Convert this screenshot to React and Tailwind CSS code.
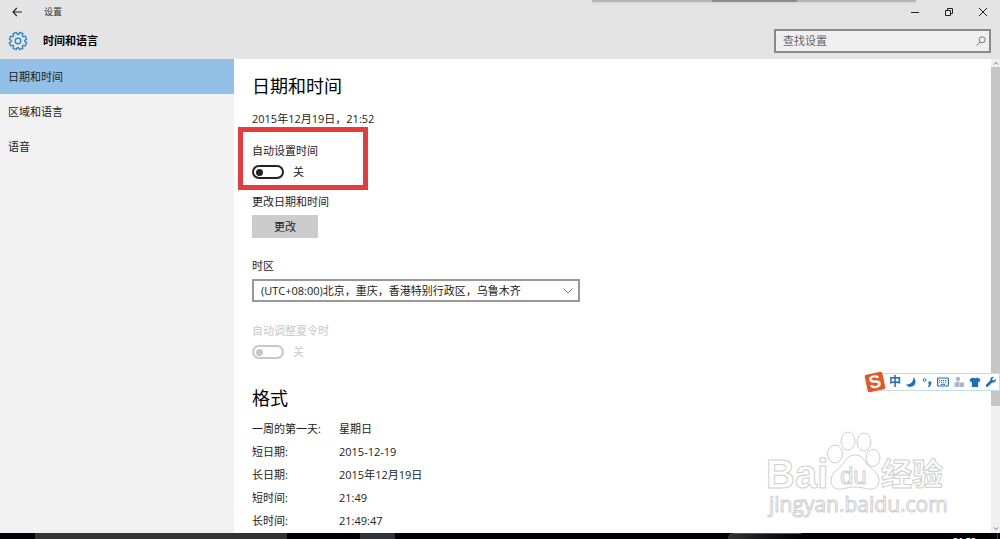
import React, { useState } from "react";

const NAV_ITEMS = ["日期和时间", "区域和语言", "语音"];

const FORMATS = [
  { label: "一周的第一天:", value: "星期日" },
  { label: "短日期:", value: "2015-12-19" },
  { label: "长日期:", value: "2015年12月19日" },
  { label: "短时间:", value: "21:49" },
  { label: "长时间:", value: "21:49:47" },
];

const GearIcon = () => {
  // eight teeth around the hub
  const points = [];
  for (let i = 0; i < 8; i++) {
    const base = (i * Math.PI) / 4 - Math.PI / 2 + Math.PI / 8;
    [
      [-0.28, 6.8],
      [-0.2, 8.8],
      [0.2, 8.8],
      [0.28, 6.8],
    ].forEach(([offset, r]) => {
      const x = 10 + r * Math.cos(base + offset);
      const y = 10 + r * Math.sin(base + offset);
      points.push(`${x.toFixed(2)},${y.toFixed(2)}`);
    });
  }
  return (
    <svg className="size-5" viewBox="0 0 20 20" fill="none" stroke="#2b83c6">
      <polygon points={points.join(" ")} strokeWidth="1.3" strokeLinejoin="round" />
      <circle cx="10" cy="10" r="2.8" strokeWidth="1.3" />
    </svg>
  );
};

const Toggle = ({ id, label, disabled }) => {
  const [on, setOn] = useState(false);
  return (
    <div className={disabled ? "text-[#c8c8c8]" : "text-[#222]"}>
      <label htmlFor={id} className="block">
        {label}
      </label>
      <div className="mt-[5px] flex h-4 items-center gap-[9px]">
        <input
          id={id}
          type="checkbox"
          role="switch"
          checked={on}
          disabled={disabled}
          onChange={(e) => setOn(e.target.checked)}
          className="flex h-3.5 w-8 appearance-none items-center rounded-full border-2 border-current px-0.5 before:size-[7px] before:rounded-full before:bg-current checked:justify-end"
        />
        <span>{on ? "开" : "关"}</span>
      </div>
    </div>
  );
};

const Header = () => (
  <header className="h-[59px] shrink-0 bg-[#e4e4e4]">
    <div className="flex h-6 items-center justify-between pr-3 pl-3">
      <div className="flex items-center gap-[22px] text-[9px] text-[#333]">
        <button type="button" aria-label="返回">
          <svg className="h-2.5 w-2.5" viewBox="0 0 10 10" fill="none" stroke="#222">
            <path d="M10 5H1M4.8 1L1 5l3.8 4" strokeWidth="1.1" />
          </svg>
        </button>
        <span>设置</span>
      </div>
      <div className="flex items-center gap-6">
        <button type="button" aria-label="最小化">
          <svg className="size-2.5" viewBox="0 0 10 10" stroke="#222">
            <path d="M1 5.5h8" />
          </svg>
        </button>
        <button type="button" aria-label="还原">
          <svg className="size-2.5" viewBox="0 0 10 10" fill="none" stroke="#222">
            <path d="M1.5 3.5h5v5h-5zM3.5 3.5v-2h5v5h-2" />
          </svg>
        </button>
        <button type="button" aria-label="关闭">
          <svg className="size-2.5" viewBox="0 0 10 10" stroke="#222">
            <path d="M1 1l8 8M9 1L1 9" />
          </svg>
        </button>
      </div>
    </div>
    <div className="flex h-[34px] items-center justify-between pr-[9px] pl-2">
      <div className="flex items-center gap-[15px]">
        <GearIcon />
        <h1 className="text-[11px] font-bold text-black">时间和语言</h1>
      </div>
      <label className="flex h-6 w-[217px] items-center border-2 border-[#8a8a8a] bg-[#efefef] pr-[3px] pl-[7px]">
        <input
          type="text"
          aria-label="查找设置"
          placeholder="查找设置"
          className="min-w-0 flex-1 bg-transparent outline-none placeholder:text-[#666]"
        />
        <svg className="size-2.5" viewBox="0 0 10 10" fill="none" stroke="#777">
          <circle cx="6.2" cy="3.8" r="3" />
          <path d="M4 6L.5 9.5" />
        </svg>
      </label>
    </div>
  </header>
);

const Sidebar = () => {
  const [active, setActive] = useState(NAV_ITEMS[0]);
  return (
    <nav className="w-[234px] shrink-0 bg-[#f1f1f1]">
      {NAV_ITEMS.map((item) => (
        <button
          key={item}
          type="button"
          onClick={() => setActive(item)}
          className={`block h-[35px] w-full px-2 text-left ${
            item === active ? "bg-[#92c0e6]" : ""
          }`}
        >
          {item}
        </button>
      ))}
    </nav>
  );
};

const ScrollBar = () => (
  <div className="flex w-[9px] shrink-0 flex-col items-center bg-[#f0f0f0]">
    <svg className="h-2 w-1.5 shrink-0" viewBox="0 0 6 8" fill="none" stroke="#777">
      <path d="M1 5.5l2-2 2 2" />
    </svg>
    <div className="w-full grow-[74] basis-0 bg-[#c6c6c6]" />
    <div className="grow-[26] basis-0" />
    <svg className="h-2 w-1.5 shrink-0" viewBox="0 0 6 8" fill="none" stroke="#777">
      <path d="M1 2.5l2 2 2-2" />
    </svg>
  </div>
);

const Watermark = () => (
  <svg
    className="pointer-events-none absolute right-[52px] bottom-3 h-[90px] w-[184px]"
    viewBox="0 0 184 90"
    fill="#fff"
    stroke="#cfcfcf"
    strokeWidth="1"
  >
    <text x="2" y="57" fontSize="40" fontWeight="700" fontFamily="Liberation Sans, sans-serif">
      Bai
    </text>
    <path d="M91 24c6 0 9 4 12 9 4 5 12 8 12 17 0 6-5 9-11 8-5-1-8-2-13-2s-8 1-13 2c-6 1-11-2-11-8 0-9 8-12 12-17 3-5 6-9 12-9z" />
    <ellipse cx="71" cy="23" rx="7.5" ry="9" />
    <ellipse cx="84" cy="10" rx="7" ry="9" />
    <ellipse cx="100" cy="11" rx="7" ry="9" />
    <ellipse cx="109" cy="27" rx="7" ry="8.5" />
    <text x="76" y="53" fontSize="24" fontFamily="Liberation Sans, sans-serif">
      du
    </text>
    <text x="117" y="54" fontSize="31" fontWeight="700" fontFamily="Noto Sans CJK SC, sans-serif">
      经验
    </text>
    <text x="5" y="81" fontSize="21" fontFamily="Open Sans, sans-serif">
      jingyan.baidu.com
    </text>
  </svg>
);

const ImeBar = () => (
  <div className="absolute right-0 bottom-[141px] flex h-[21px] items-center">
    <span className="z-10 -mr-1 flex size-[18px] -rotate-12 items-center justify-center rounded-xs bg-[#e2592b] font-[Liberation_Sans] text-[18px] leading-none font-bold text-white">
      S
    </span>
    <div className="flex h-[18px] items-center gap-1 border border-[#c5dcec] bg-white pr-0.5 pl-2 text-[#1f6fb8]">
      <span className="text-[12px] leading-none font-bold">中</span>
      <svg className="size-3" viewBox="0 0 12 12" fill="currentColor">
        <path d="M8.500 1c3.500 3.500 2.500 9.500-3 9.800C3.500 10.900 2 10 1 8.500 5.500 8.500 8.500 6 8.500 1z" />
      </svg>
      <svg className="size-3" viewBox="0 0 12 12" fill="currentColor">
        <circle cx="3.500" cy="4" r="1.400" fill="none" stroke="currentColor" />
        <path d="M7.500 5.500h2.800v2.500L8.500 11H7l1-2.700h-.5z" />
      </svg>
      <svg className="size-3" viewBox="0 0 12 12" fill="none" stroke="currentColor">
        <rect x=".6" y="2" width="10.800" height="8" rx="1" strokeWidth="1.200" />
        <path d="M2 4.500h8M2 6.300h8" strokeDasharray="1.200 .8" />
        <path d="M3.500 8.300h5" />
      </svg>
      <svg className="size-3" viewBox="0 0 12 12" fill="#a9b7c6">
        <circle cx="5" cy="3" r="2.200" />
        <path d="M1.500 11V8c0-1.500 1.500-2.300 3.500-2.300h1.500V11z" />
        <rect x="7" y="6.500" width="4" height="4.500" />
      </svg>
      <svg className="size-3" viewBox="0 0 12 12" fill="currentColor">
        <path d="M4 1.500c1 1 3 1 4 0l3.500 1.800-1 2.700-1.300-.3V11H2.800V5.700L1.500 6l-1-2.700z" />
      </svg>
      <svg className="size-3" viewBox="0 0 12 12" fill="currentColor">
        <path d="M10.800 2.800L9 4.600 7.500 4.200 7.200 2.800 9 1C7 .4 4.800 2 5.300 4.500L1 8.800c-.9 1 .9 2.900 1.900 2l4.300-4.200c2.600.4 4.300-1.600 3.600-3.800z" />
      </svg>
    </div>
  </div>
);

const Taskbar = () => (
  <footer className="flex h-1.5 shrink-0 overflow-hidden bg-[#020206]">
    <div className="ml-[35px] w-[252px] bg-[#333]" />
    <div className="ml-[73px] w-[35px] bg-[#30313a]" />
    <div className="flex flex-1 justify-end">
      <div className="w-[73px] rounded-tl-md border-t border-[#555] bg-linear-to-r from-[#333] to-[#020206]" />
      <time className="mr-[21px] ml-[152px] pt-[3px] text-[9px] leading-none font-bold text-white">
        21:52
      </time>
      <div className="mr-0.5 w-px bg-[#444]" />
    </div>
  </footer>
);

const App = () => {
  const [zone, setZone] = useState("beijing");

  return (
    <div className="relative flex h-screen flex-col overflow-hidden bg-white font-['Open_Sans','Noto_Sans_CJK_SC',sans-serif] text-[11px] leading-4 text-[#222]">
      {/* edge of the window docked above */}
      <div className="absolute top-0 right-[84px] flex h-0.5 w-[324px] justify-center bg-[#b5b5b5] shadow-sm">
        <div className="w-[85px] bg-[#8c8c8c]" />
      </div>

      <Header />

      <div className="relative flex min-h-0 flex-1">
        <Sidebar />
        <main className="min-w-0 flex-1 overflow-hidden pt-[13px] pl-[18px]">
          <h2 className="text-[18px] leading-7 text-black">日期和时间</h2>
          <p className="mt-[11px]">2015年12月19日，21:52</p>

          <div className="relative mt-4">
            <Toggle id="auto-time" label="自动设置时间" />
            <div className="pointer-events-none absolute -top-4 -left-3.5 h-[63px] w-[130px] border-5 border-[#e43c3f]" />
          </div>

          <p className="mt-3.5">更改日期和时间</p>
          <button type="button" className="mt-[5px] block h-[23px] w-[66px] bg-[#ccc]">
            更改
          </button>

          <label htmlFor="zone" className="mt-5 block">
            时区
          </label>
          <div className="relative mt-[5px] w-[328px]">
            <select
              id="zone"
              value={zone}
              onChange={(e) => setZone(e.target.value)}
              className="block h-[23px] w-full appearance-none border-2 border-[#999] bg-white px-[7px]"
            >
              <option value="beijing">(UTC+08:00)北京，重庆，香港特别行政区，乌鲁木齐</option>
            </select>
            <svg
              className="pointer-events-none absolute top-2 right-1.5 h-2 w-3"
              viewBox="0 0 12 8"
              fill="none"
              stroke="#777"
            >
              <path d="M1.500 1.500L6 6l4.500-4.500" />
            </svg>
          </div>

          <div className="mt-[21px]">
            <Toggle id="auto-dst" label="自动调整夏令时" disabled />
          </div>

          <h2 className="mt-6 text-[18px] leading-7 text-black">格式</h2>
          <table className="mt-[5px]">
            <tbody>
              {FORMATS.map((row) => (
                <tr key={row.label} className="h-[23px]">
                  <th scope="row" className="w-[87px] p-0 text-left font-normal">
                    {row.label}
                  </th>
                  <td className="p-0">{row.value}</td>
                </tr>
              ))}
            </tbody>
          </table>
        </main>
        <ScrollBar />
        <Watermark />
        <ImeBar />
      </div>

      <Taskbar />
    </div>
  );
};

export default App;
